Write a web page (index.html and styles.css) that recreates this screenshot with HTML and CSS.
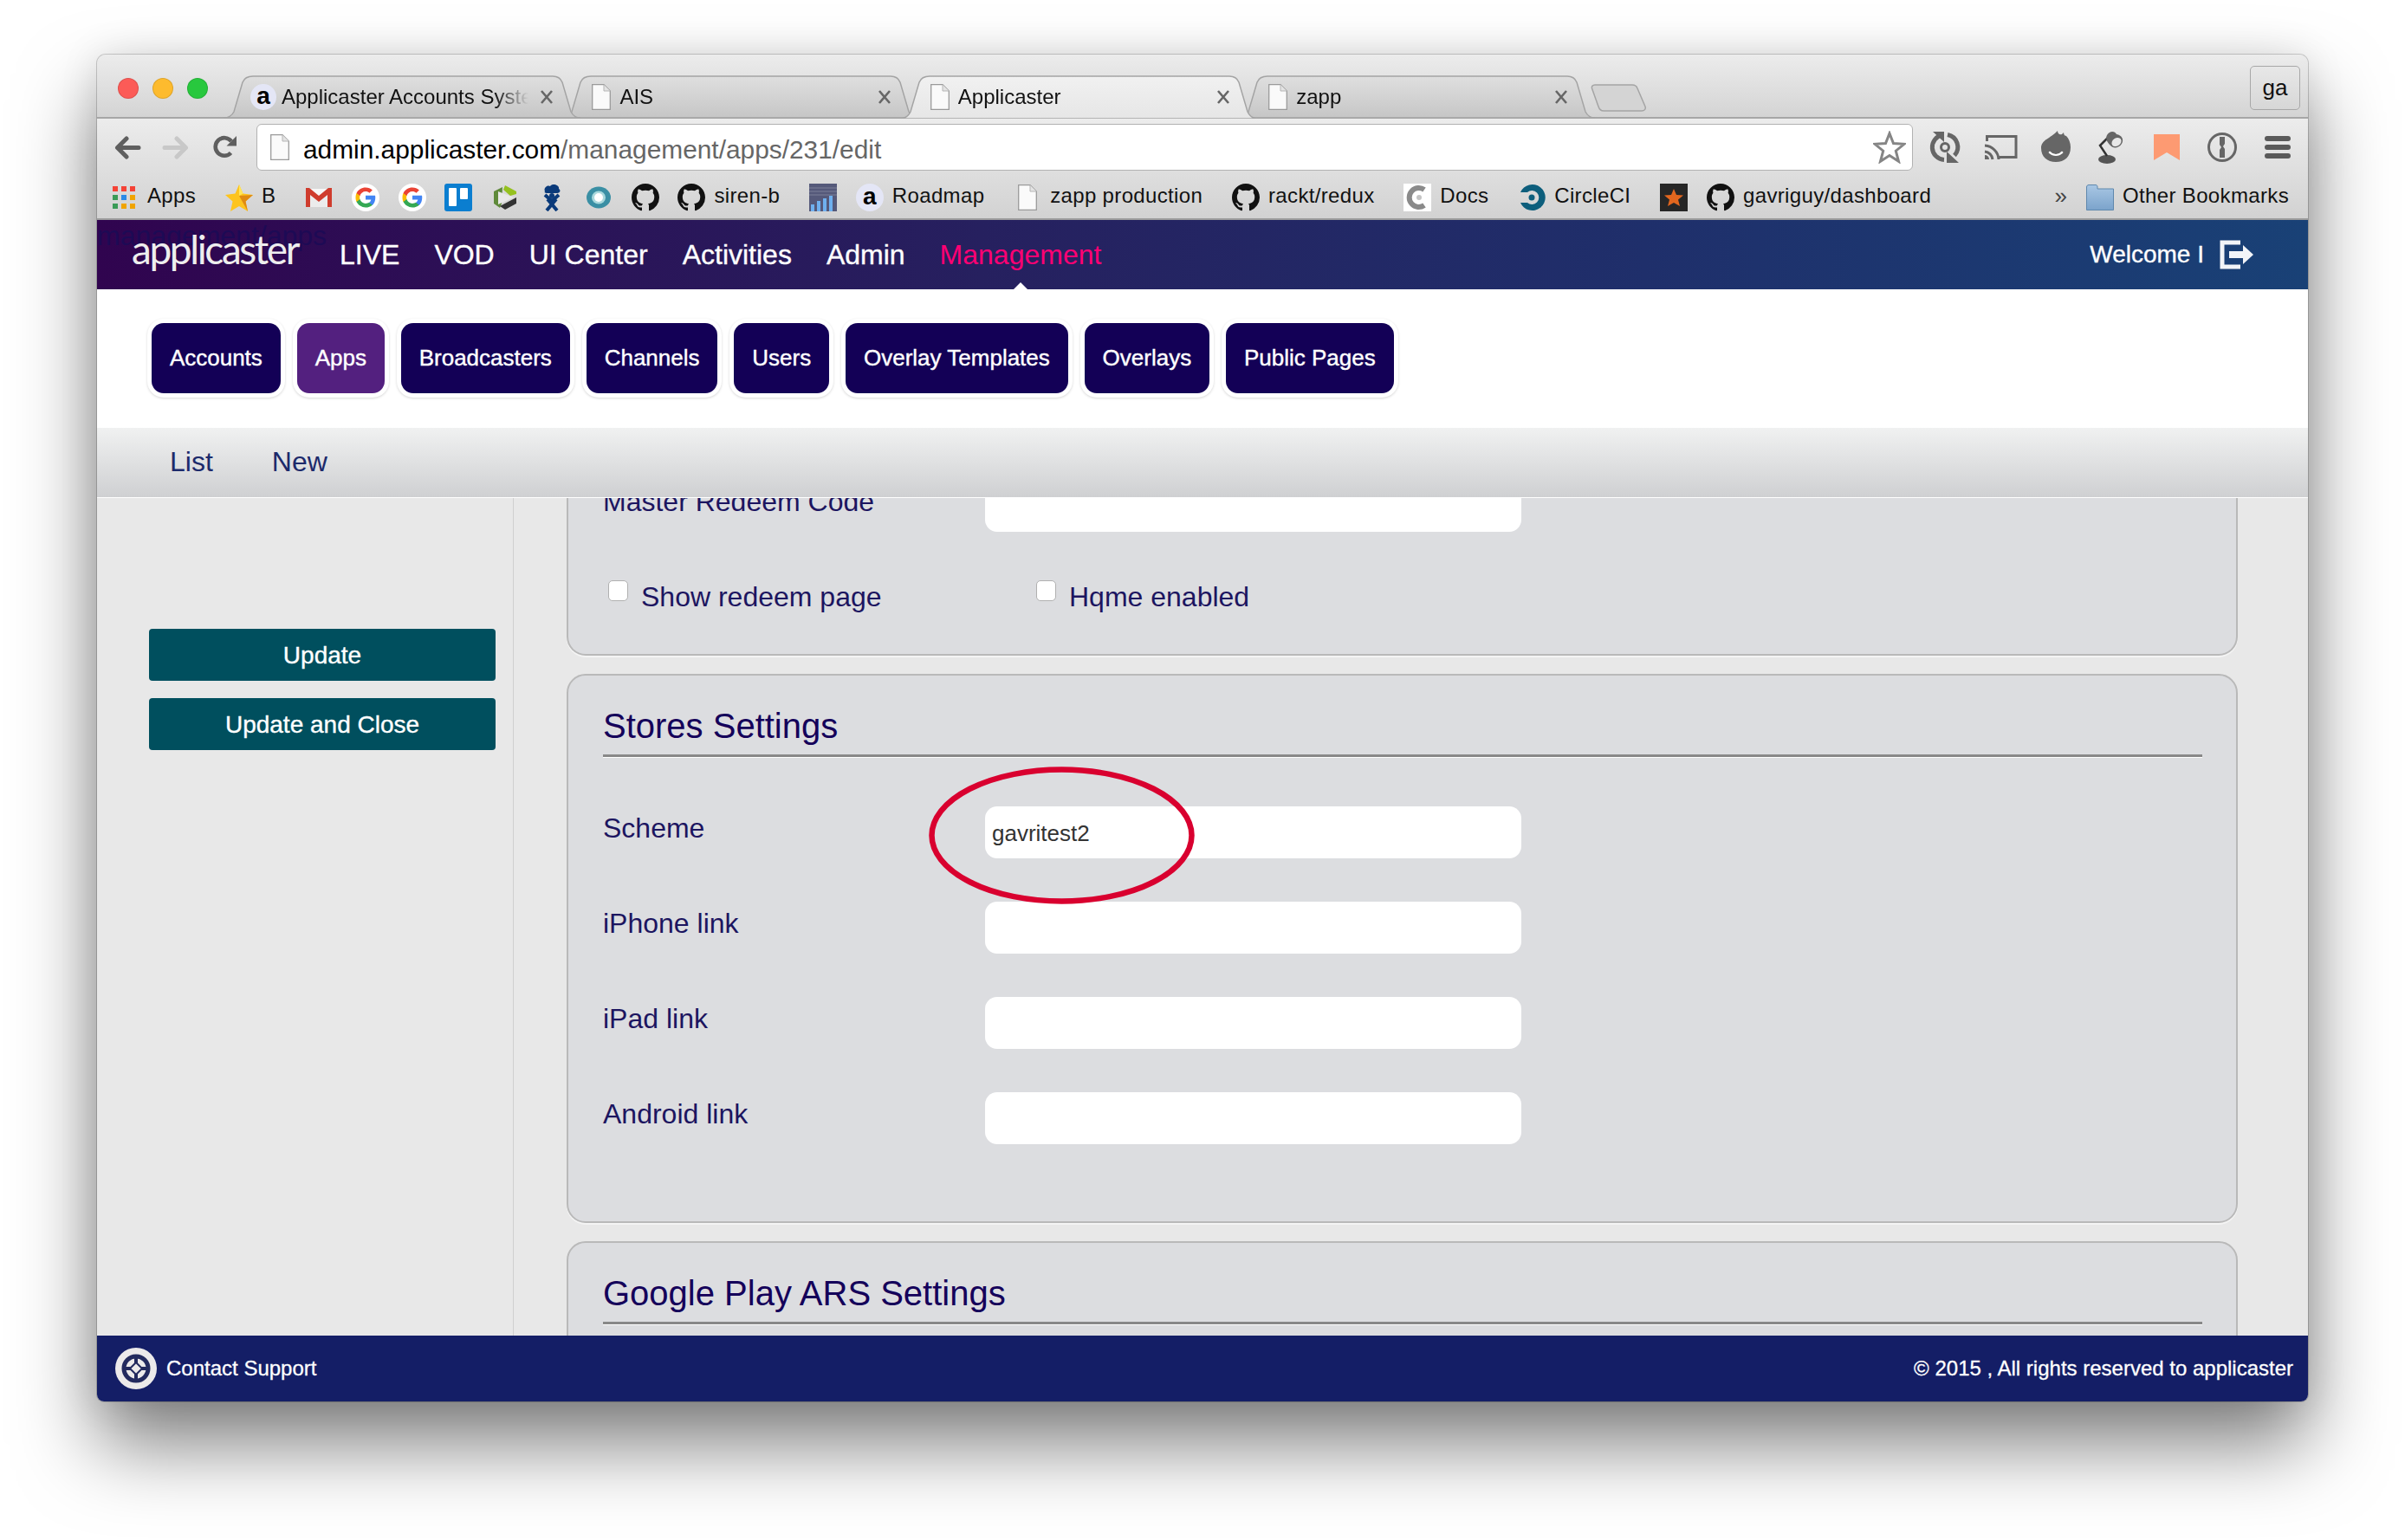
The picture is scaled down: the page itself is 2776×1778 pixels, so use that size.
FILE: index.html
```html
<!DOCTYPE html>
<html lang="en">
<head>
<meta charset="utf-8">
<title>Applicaster</title>
<link rel="stylesheet" href="styles.css">
</head>
<body>
<svg class="sprite" aria-hidden="true">
  <defs>
    <linearGradient id="tabOff" x1="0" y1="0" x2="0" y2="1"><stop offset="0" stop-color="#dfdfdf"/><stop offset="1" stop-color="#c6c6c6"/></linearGradient>
    <linearGradient id="tabOn" x1="0" y1="0" x2="0" y2="1"><stop offset="0" stop-color="#f1f1f1"/><stop offset="1" stop-color="#e6e6e6"/></linearGradient>
    <linearGradient id="folder" x1="0" y1="0" x2="0" y2="1"><stop offset="0" stop-color="#a9c7e4"/><stop offset="1" stop-color="#7ba3cb"/></linearGradient>
    <symbol id="file" viewBox="0 0 22 30"><path d="M.7.7H14L21.300 8V29.300H.7Z" fill="#fafafa" stroke="#9a9a9a" stroke-width="1.300"/><path d="M14 .7V8H21.300" fill="#e4e4e4" stroke="#b5b5b5" stroke-width="1"/></symbol>
    <symbol id="gh" viewBox="0 0 16 16"><path fill="#111" d="M8 0C3.580 0 0 3.580 0 8c0 3.540 2.290 6.530 5.470 7.590.4.07.55-.17.55-.38 0-.19-.01-.82-.01-1.490-2.010.37-2.530-.49-2.690-.94-.09-.23-.48-.94-.82-1.130-.28-.15-.68-.52-.01-.53.63-.01 1.080.58 1.230.82.72 1.210 1.870.87 2.330.66.07-.52.28-.87.51-1.070-1.780-.2-3.640-.89-3.640-3.950 0-.87.31-1.590.82-2.150-.08-.2-.36-1.020.08-2.120 0 0 .67-.21 2.200.82.64-.18 1.320-.27 2-.27.68 0 1.360.09 2 .27 1.530-1.040 2.200-.82 2.200-.82.44 1.100.16 1.920.08 2.120.51.56.82 1.270.82 2.150 0 3.070-1.870 3.750-3.650 3.950.29.25.54.73.54 1.480 0 1.070-.01 1.930-.01 2.200 0 .21.15.46.55.38A8.013 8.013 0 0 0 16 8c0-4.420-3.580-8-8-8z"/></symbol>
    <symbol id="goog" viewBox="0 0 64 64"><circle cx="32" cy="32" r="32" fill="#fff"/><g transform="translate(4.400 4.400) scale(1.150)"><path fill="#4285f4" d="M43.600 24.500c0-1.600-.1-3.100-.4-4.500H24v8.500h11c-.5 2.500-1.900 4.700-4.100 6.100v5.100h6.600c3.900-3.600 6.100-8.900 6.100-15.200z"/><path fill="#34a853" d="M24 44c5.500 0 10.100-1.800 13.500-4.900l-6.600-5.100c-1.800 1.200-4.200 2-6.900 2-5.300 0-9.800-3.600-11.400-8.400H5.800v5.300C9.100 39.500 16 44 24 44z"/><path fill="#fbbc05" d="M12.600 27.600c-.4-1.200-.6-2.500-.6-3.600s.2-2.400.6-3.600v-5.300H5.800C4.700 17.300 4 20.600 4 24s.7 6.700 1.800 8.900z"/><path fill="#ea4335" d="M24 12c3 0 5.700 1 7.800 3l5.900-5.900C34.100 5.800 29.500 4 24 4 16 4 9.100 8.500 5.800 15.100l6.800 5.300C14.200 15.600 18.700 12 24 12z"/></g></symbol>
    <symbol id="tabshape-off" viewBox="0 0 412 50"><path d="M0 49C7 49 10 46 12 42L22 8C24 3 28 1 34 1H380C386 1 389 3 391 8L401 42C403 46 406 49 412 49Z" fill="url(#tabOff)" stroke="#a4a4a4" stroke-width="1.500"/></symbol>
    <symbol id="tabshape-on" viewBox="0 0 412 50"><path d="M0 50C7 50 10 46 12 42L22 8C24 3 28 1 34 1H380C386 1 389 3 391 8L401 42C403 46 406 50 412 50Z" fill="url(#tabOn)" stroke="#a4a4a4" stroke-width="1.500"/></symbol>
    <symbol id="close" viewBox="0 0 16 18"><path d="M2 2L14 16M14 2L2 16" stroke="#666" stroke-width="2.600" fill="none"/></symbol>
  </defs>
</svg>

<div class="window">
  <header class="tabstrip">
    <div class="lights"><span class="light red"></span><span class="light amber"></span><span class="light green"></span></div>
    <div class="tabs">
      <div class="tab first">
        <svg class="tab-bg"><use href="#tabshape-off"/></svg>
        <span class="tab-icon"><span class="fav-a">a</span></span>
        <span class="tab-title">Applicaster Accounts System</span>
        <svg class="tab-close"><use href="#close"/></svg>
      </div>
      <div class="tab second">
        <svg class="tab-bg"><use href="#tabshape-off"/></svg>
        <span class="tab-icon"><svg class="file"><use href="#file"/></svg></span>
        <span class="tab-title">AIS</span>
        <svg class="tab-close"><use href="#close"/></svg>
      </div>
      <div class="tab active">
        <svg class="tab-bg"><use href="#tabshape-on"/></svg>
        <span class="tab-icon"><svg class="file"><use href="#file"/></svg></span>
        <span class="tab-title">Applicaster</span>
        <svg class="tab-close"><use href="#close"/></svg>
      </div>
      <div class="tab fourth">
        <svg class="tab-bg"><use href="#tabshape-off"/></svg>
        <span class="tab-icon"><svg class="file"><use href="#file"/></svg></span>
        <span class="tab-title">zapp</span>
        <svg class="tab-close"><use href="#close"/></svg>
      </div>
      <svg class="newtab" viewBox="0 0 64 32"><path d="M5 1H48C51 1 53 2 54 5L63 26C64 29 62 31 59 31H15C12 31 10 29 9 26L1.500 5C1 3 2 1 5 1Z" fill="#d4d4d4" stroke="#a4a4a4" stroke-width="1.500"/></svg>
    </div>
    <div class="profile">ga</div>
  </header>

  <div class="chrome-lower">
    <div class="toolbar">
      <svg class="tb-back" viewBox="0 0 31 27"><path d="M14 3L3.500 13.500L14 24M4 13.500H28" fill="none" stroke="#5f5f5f" stroke-width="5" stroke-linecap="round" stroke-linejoin="round"/></svg>
      <svg class="tb-forward" viewBox="0 0 31 27"><path d="M17 3L27.500 13.500L17 24M27 13.500H3" fill="none" stroke="#c8c8c8" stroke-width="5" stroke-linecap="round" stroke-linejoin="round"/></svg>
      <svg class="tb-reload" viewBox="0 0 28 28"><path d="M20.500 20.500A10.300 10.300 0 1 1 21 7" fill="none" stroke="#5f5f5f" stroke-width="4.600"/><path d="M27 1V12.500H15.500Z" fill="#5f5f5f"/></svg>
      <div class="omnibox">
        <svg class="file"><use href="#file"/></svg>
        <span class="url"><span class="url-host">admin.applicaster.com</span>/management/apps/231/edit</span>
        <svg class="star" viewBox="0 0 38 38"><path d="M19 3L23.500 14.500L36 15.300L26.300 23.200L29.500 35.300L19 28.500L8.500 35.300L11.700 23.200L2 15.300L14.500 14.500Z" fill="none" stroke="#858585" stroke-width="3"/></svg>
      </div>
      <div class="extensions">
        <svg class="ext" viewBox="0 0 40 40"><path d="M17 5.800A14.500 14.500 0 0 0 19 34.500M23 5.500A14.500 14.500 0 0 1 31 29.500" fill="none" stroke="#666" stroke-width="5"/><path d="M6 2H19V14Z M36 38H22V25Z" fill="#666"/><circle cx="20" cy="20" r="4.500" fill="none" stroke="#666" stroke-width="3"/></svg>
        <svg class="ext" viewBox="0 0 40 40"><path d="M4.500 13V7.500H38V31.500H19" fill="none" stroke="#666" stroke-width="3"/><path d="M2 18A17 17 0 0 1 18 34M2 25A10 10 0 0 1 11 34" fill="none" stroke="#666" stroke-width="3"/><path d="M2 29A5 5 0 0 1 7 34H2Z" fill="#666"/></svg>
        <svg class="ext" viewBox="0 0 40 40"><path d="M22 1C22 4 24 6 27 5L29 3C29 6 31 7 32 7C35 10 37 15 37 20C37 31 30 37 20 37C10 37 3 31 3 21C3 11 14 10 22 1Z" fill="#666"/><path d="M13 26C17 30 23 30 27 26" fill="none" stroke="#fff" stroke-width="2"/><circle cx="13" cy="26" r="1.300" fill="#fff"/><circle cx="27" cy="26" r="1.300" fill="#fff"/></svg>
        <svg class="ext" viewBox="0 0 40 40"><ellipse cx="15" cy="34" rx="10" ry="5" fill="#555"/><path d="M15 30L7 18L17 8" fill="none" stroke="#333" stroke-width="2.500"/><path d="M15 6C18 1 24 1 26 5C32 6 35 11 32 16C29 21 22 22 19 18C15 14 13 10 15 6Z" fill="#666"/><ellipse cx="26" cy="14" rx="6" ry="4.500" fill="#e8e8e8" transform="rotate(-35 26 14)"/></svg>
        <svg class="ext" viewBox="0 0 40 40"><path d="M5 5H35V35L20 26L5 35Z" fill="#fd9a72"/></svg>
        <svg class="ext" viewBox="0 0 40 40"><circle cx="20" cy="20" r="15.500" fill="none" stroke="#666" stroke-width="3"/><path d="M17 8H23V16L21 19L23 22V32H17V23L19 20L17 17Z" fill="#666"/></svg>
        <svg class="ext" viewBox="0 0 40 40"><path d="M8 10H32M8 20H32M8 30H32" stroke="#5a5a5a" stroke-width="6" stroke-linecap="round"/></svg>
      </div>
    </div>
    <nav class="bookmarks">
      <a class="bm"><svg class="bm-icon" viewBox="0 0 26 26"><g fill="#f44336"><rect width="6" height="6"/><rect x="10" width="6" height="6"/><rect x="20" width="6" height="6"/></g><rect y="10" width="6" height="6" fill="#3a9b57"/><rect x="10" y="10" width="6" height="6" fill="#2a8ae6"/><rect x="20" y="10" width="6" height="6" fill="#f0a400"/><rect y="20" width="6" height="6" fill="#3a9b57"/><rect x="10" y="20" width="6" height="6" fill="#f0a400"/><rect x="20" y="20" width="6" height="6" fill="#f0a400"/></svg><span class="bm-label">Apps</span></a>
      <a class="bm"><svg class="bm-icon" viewBox="0 0 32 32"><path d="M16 1L20.500 11.500L32 13L23.500 20.500L26 32L16 26L6 32L8.500 20.500L0 13L11.500 11.500Z" fill="#fdc41e"/><path d="M16 14L32 13L23.500 20.500L26 32Z" fill="#e08a12"/><path d="M16 1L20.500 11.500L16 14Z" fill="#ffe65a"/></svg><span class="bm-label">B</span></a>
      <a class="bm"><svg class="bm-icon" viewBox="0 0 32 32"><path d="M2 6H30V27H2Z" fill="#ececec"/><path d="M2 6L16 17L30 6" fill="#f6f6f6"/><path d="M1 5H5L16 14L27 5H31V27H26V13L16 21L6 13V27H1Z" fill="#cf3c2d"/></svg></a>
      <a class="bm"><svg class="bm-icon"><use href="#goog"/></svg></a>
      <a class="bm"><svg class="bm-icon"><use href="#goog"/></svg></a>
      <a class="bm"><svg class="bm-icon" viewBox="0 0 32 32"><rect width="32" height="32" rx="3" fill="#0b7ed0"/><rect x="5" y="5" width="9" height="21" rx="1" fill="#fff"/><rect x="18" y="5" width="9" height="13" rx="1" fill="#fff"/></svg></a>
      <a class="bm"><svg class="bm-icon" viewBox="0 0 32 32"><path d="M16 2L29 9V12L22 14L14 7Z" fill="#95c11f"/><path d="M3 9L13 4L12 23L10 28L3 23Z" fill="#5f8a3a"/><path d="M8 9L26 16L8 24Z" fill="#e8e8e8"/><path d="M10 26L29 16V23L16 30Z" fill="#333"/></svg></a>
      <a class="bm"><svg class="bm-icon" viewBox="0 0 32 32"><path d="M8 9C6 5 11 1 14 3C17 -1 25 2 24 6C27 8 25 11 22 11H10C8 11 7 10 8 9Z" fill="#0a3a7a"/><path d="M8 13L16 20L24 13" fill="none" stroke="#0a3a7a" stroke-width="4"/><path d="M11 18L22 31M21 18L10 31" fill="none" stroke="#0a3a7a" stroke-width="4"/><circle cx="16" cy="14" r="3" fill="#0a3a7a"/></svg></a>
      <a class="bm"><svg class="bm-icon" viewBox="0 0 32 32"><ellipse cx="16" cy="16" rx="14" ry="12.500" fill="#3a8fa4"/><ellipse cx="16" cy="16" rx="8" ry="7.500" fill="#a8d8dc"/><circle cx="16" cy="16" r="5" fill="#fff"/></svg></a>
      <a class="bm"><svg class="bm-icon"><use href="#gh"/></svg></a>
      <a class="bm"><svg class="bm-icon"><use href="#gh"/></svg><span class="bm-label">siren-b</span></a>
      <a class="bm"><svg class="bm-icon" viewBox="0 0 32 32"><rect width="32" height="32" fill="#55597a"/><path d="M0 5H32M0 9H32M0 13H32" stroke="#7d8098" stroke-width="1"/><g fill="#6fb0ef"><rect x="2" y="24" width="4" height="8"/><rect x="9" y="20" width="4" height="12"/><rect x="16" y="17" width="4" height="15"/><rect x="23" y="14" width="4" height="18"/></g></svg></a>
      <a class="bm"><span class="fav-a bm-fav">a</span><span class="bm-label">Roadmap</span></a>
      <a class="bm"><span class="bm-slot"><svg class="file"><use href="#file"/></svg></span><span class="bm-label">zapp production</span></a>
      <a class="bm"><svg class="bm-icon"><use href="#gh"/></svg><span class="bm-label">rackt/redux</span></a>
      <a class="bm"><svg class="bm-icon" viewBox="0 0 32 32"><rect width="32" height="32" fill="#fff"/><path d="M24 7A11 11 0 1 0 24 25" fill="none" stroke="#8a8a8a" stroke-width="6"/><circle cx="18" cy="16" r="3" fill="#c4c4c4"/></svg><span class="bm-label">Docs</span></a>
      <a class="bm"><svg class="bm-icon" viewBox="0 0 32 32"><path d="M3 10A15 15 0 1 1 3 22H11A8 8 0 1 0 11 10Z" fill="#0d5e7c"/><circle cx="16" cy="16" r="3.500" fill="#0d5e7c"/></svg><span class="bm-label">CircleCI</span></a>
      <a class="bm"><svg class="bm-icon" viewBox="0 0 32 32"><rect width="32" height="32" fill="#262626"/><path d="M16 6L19 13L27 13.500L21 18.500L23 26L16 22L9 26L11 18.500L5 13.500L13 13Z" fill="#e2661e"/></svg></a>
      <a class="bm"><svg class="bm-icon"><use href="#gh"/></svg><span class="bm-label">gavriguy/dashboard</span></a>
      <span class="chevrons">»</span>
      <a class="bm"><svg class="bm-icon" viewBox="0 0 32 30"><path d="M.5 6V3C.5 1.500 1.500 .5 3 .5H11C12.500 .5 13 1.500 13 3V5H31.500V29.500H.5Z" fill="url(#folder)" stroke="#5f88ad"/></svg><span class="bm-label last">Other Bookmarks</span></a>
    </nav>
  </div>

  <nav class="appnav">
    <span class="ghost-crumb">management/apps</span>
    <span class="logo">applicaster</span>
    <a class="nav-item">LIVE</a>
    <a class="nav-item">VOD</a>
    <a class="nav-item">UI Center</a>
    <a class="nav-item">Activities</a>
    <a class="nav-item">Admin</a>
    <a class="nav-item current">Management</a>
    <span class="welcome">Welcome I</span>
    <svg class="logout" viewBox="0 0 40 34"><path d="M24 3H3V31H24" fill="none" stroke="#f2f4f8" stroke-width="5"/><path d="M11 13H27V6L39 17L27 28V21H11Z" fill="#f2f4f8"/></svg>
  </nav>

  <div class="section-tabs">
    <a class="pill">Accounts</a>
    <a class="pill on">Apps</a>
    <a class="pill">Broadcasters</a>
    <a class="pill">Channels</a>
    <a class="pill">Users</a>
    <a class="pill">Overlay Templates</a>
    <a class="pill">Overlays</a>
    <a class="pill">Public Pages</a>
  </div>

  <div class="subnav">
    <a class="sub-link">List</a>
    <a class="sub-link">New</a>
  </div>

  <main class="content">
    <aside class="sidebar">
      <button class="action">Update</button>
      <button class="action">Update and Close</button>
    </aside>
    <div class="panels">
      <section class="panel scrolled">
        <div class="row"><label class="field-label">Master Redeem Code</label><div class="field"><input class="text-input" type="text"></div></div>
        <div class="checks">
          <label class="check"><input class="checkbox" type="checkbox"><span>Show redeem page</span></label>
          <label class="check"><input class="checkbox" type="checkbox"><span>Hqme enabled</span></label>
        </div>
      </section>
      <section class="panel stores">
        <h2 class="panel-title">Stores Settings</h2>
        <div class="row"><label class="field-label">Scheme</label><div class="field"><input class="text-input" type="text" value="gavritest2">
          <svg class="annotation" viewBox="0 0 307 159"><ellipse cx="153.500" cy="79.500" rx="150" ry="76" fill="none" stroke="#d9002f" stroke-width="6.500"/></svg></div></div>
        <div class="row"><label class="field-label">iPhone link</label><div class="field"><input class="text-input" type="text"></div></div>
        <div class="row"><label class="field-label">iPad link</label><div class="field"><input class="text-input" type="text"></div></div>
        <div class="row"><label class="field-label">Android link</label><div class="field"><input class="text-input" type="text"></div></div>
      </section>
      <section class="panel">
        <h2 class="panel-title">Google Play ARS Settings</h2>
      </section>
    </div>
  </main>

  <footer class="footer">
    <svg class="support-icon" viewBox="0 0 48 48"><circle cx="24" cy="24" r="24" fill="#eceaea"/><circle cx="24" cy="24" r="14" fill="none" stroke="#232a5e" stroke-width="5"/><path d="M24 10V19M24 29V38M10 24H19M29 24H38" stroke="#232a5e" stroke-width="4"/><path d="M24 17L31 24L24 31L17 24Z" fill="#eceaea" stroke="#232a5e" stroke-width="2"/></svg>
    <span class="support-text">Contact Support</span>
    <span class="copyright">© 2015 , All rights reserved to applicaster</span>
  </footer>
</div>
</body>
</html>
```

FILE: styles.css
```css
* { box-sizing: border-box; }
html, body { margin: 0; background: #fff; }
body {
  width: 2776px;
  height: 1778px;
  padding: 63px 112px 0;
  overflow: hidden;
  font-family: "Liberation Sans", Arial, sans-serif;
}
.sprite { position: absolute; width: 0; height: 0; }

.window {
  width: 2552px;
  height: 1555px;
  display: flex;
  flex-direction: column;
  border-radius: 10px 10px 8px 8px;
  overflow: hidden;
  box-shadow: 0 50px 90px rgba(0,0,0,.5), 0 0 46px rgba(0,0,0,.1), 0 0 0 1px rgba(0,0,0,.18);
  background: #e8e8e8;
}

/* tab strip */
.tabstrip {
  height: 74px;
  flex: none;
  display: flex;
  align-items: flex-start;
  background: linear-gradient(#ececec, #d4d4d4);
  border-bottom: 2px solid #a6a6a6;
}
.lights { display: flex; gap: 16px; margin: 27px 0 0 24px; }
.light { width: 24px; height: 24px; border-radius: 50%; border: 1px solid rgba(0,0,0,.12); }
.red { background: #fc5b57; }
.amber { background: #fdbb2e; }
.green { background: #28c83e; }
.tabs { display: flex; align-items: flex-start; margin: 24px 0 0 18px; }
.tab {
  position: relative;
  width: 412px;
  height: 50px;
  margin-right: -21.600px;
  display: flex;
  align-items: center;
  padding: 0 31px;
  font-size: 24px;
  color: #111;
}
.tab-bg { position: absolute; left: 0; top: 0; width: 412px; height: 50px; }
.first { z-index: 3; }
.second { z-index: 2; }
.active { z-index: 4; }
.fourth { z-index: 1; }
.tab-icon { position: relative; width: 30px; height: 30px; display: flex; align-items: center; justify-content: center; flex: none; margin-right: 6px; }
.file { width: 22px; height: 30px; flex: none; }
.fav-a {
  width: 30px; height: 30px; border-radius: 50%;
  background: #e4e6f6;
  color: #000;
  font-weight: 700;
  font-size: 28px;
  line-height: 28px;
  text-align: center;
  flex: none;
}
.tab-title {
  position: relative;
  flex: 1;
  white-space: nowrap;
  overflow: hidden;
  -webkit-mask-image: linear-gradient(to left, transparent 6px, #000 45px);
  mask-image: linear-gradient(to left, transparent 6px, #000 45px);
}
.tab-close { position: relative; width: 16px; height: 18px; flex: none; margin-left: 7px; }
.newtab { width: 64px; height: 32px; margin: 10px 0 0 16px; position: relative; flex: none; }
.profile {
  margin: 13px 9px 0 auto;
  width: 58px; height: 51px;
  border: 1px solid #a8a8a8;
  border-radius: 5px;
  font-size: 26px;
  text-align: center;
  line-height: 48px;
  color: #111;
  flex: none;
}

/* toolbar + bookmarks */
.chrome-lower {
  flex: none;
  background: linear-gradient(#ececec, #d2d2d2);
  border-bottom: 2px solid #9c9c9c;
}
.toolbar { height: 66px; display: flex; align-items: center; padding-left: 20px; }
.tb-back, .tb-forward { width: 31px; height: 27px; flex: none; }
.tb-forward { margin-left: 24px; }
.tb-reload { width: 28px; height: 28px; margin-left: 28px; flex: none; }
.omnibox {
  margin-left: 22px;
  width: 1912px;
  height: 54px;
  background: #fff;
  border: 1px solid #b2b2b2;
  border-radius: 6px;
  display: flex;
  align-items: center;
  padding-left: 15px;
  font-size: 29.870px;
  color: #666;
}
.url { margin: 5px 0 0 16px; white-space: nowrap; }
.url-host { color: #000; }
.star { width: 38px; height: 38px; margin-left: auto; margin-right: 7px; flex: none; }
.extensions { display: flex; gap: 24px; margin-left: 17px; }
.ext { width: 40px; height: 40px; flex: none; }

.bookmarks {
  height: 49px;
  display: flex;
  align-items: center;
  gap: 21.800px;
  padding: 0 22px 0 18px;
  font-size: 24px;
  letter-spacing: .35px;
  color: #111;
}
.bm { display: flex; align-items: center; gap: 10px; flex: none; }
.bm-icon { width: 32px; height: 32px; flex: none; }
.bm:first-child .bm-icon { width: 26px; height: 26px; margin-right: 4px; }
.bm-fav { width: 32px; height: 32px; line-height: 30px; }
.bm-slot { width: 32px; display: flex; justify-content: center; }
.bm-label { margin: -3px 12px 0 0; white-space: nowrap; }
.bm-label.last { margin-right: 0; }
.chevrons { margin-left: auto; font-size: 26px; color: #444; margin-top: -3px; }

/* app nav */
.appnav {
  position: relative;
  height: 80px;
  flex: none;
  display: flex;
  align-items: center;
  gap: 40px;
  padding: 0 62px 0 40px;
  background: linear-gradient(90deg, #30044f 0%, #26205f 40%, #1f2f6b 70%, #194176 100%);
  color: #fff;
  font-size: 32px;
}
.ghost-crumb { position: absolute; left: 0; top: 0; line-height: 36px; color: #1d0a55; white-space: nowrap; }
.logo {
  position: relative;
  width: 200px;
  font-family: Lato, "Open Sans", sans-serif;
  font-size: 46px;
  letter-spacing: -2.400px;
  line-height: 50px;
  margin-top: -13px;
  color: #eee;
}
.nav-item { position: relative; height: 100%; display: flex; align-items: center; -webkit-text-stroke: .35px currentColor; }
.nav-item.current { color: #ff0073; -webkit-text-stroke: 0; }
.nav-item.current::after {
  content: "";
  position: absolute;
  left: 50%;
  bottom: 0;
  margin-left: -8px;
  border: 8px solid transparent;
  border-top: 0;
  border-bottom-color: #fff;
}
.welcome { margin-left: auto; font-size: 28px; margin-right: -22px; -webkit-text-stroke: .35px #fff; }
.logout { width: 40px; height: 34px; flex: none; }

/* section tabs */
.section-tabs {
  height: 160px;
  flex: none;
  background: #fff;
  display: flex;
  gap: 19px;
  align-items: flex-start;
  padding: 39px 0 0 63px;
}
.pill {
  height: 81px;
  padding: 0 20.900px;
  display: flex;
  align-items: center;
  border-radius: 14px;
  background: #130056;
  color: #fff;
  font-size: 26px;
  -webkit-text-stroke: .4px #fff;
  box-shadow: 0 0 0 5px #fff, 0 1px 3px 5px rgba(0,0,0,.16);
}
.pill.on { background: #53207f; }

.subnav {
  height: 81px;
  flex: none;
  display: flex;
  align-items: center;
  gap: 68px;
  padding: 0 0 2px 84px;
  background: linear-gradient(#f0f1f1, #cfd0d2);
  border-bottom: 1px solid #fff;
  font-size: 32px;
  color: #1c2a6b;
}

/* content */
.content { flex: 1; min-height: 0; display: flex; overflow: hidden; background: #e8e8e8; }
.sidebar {
  width: 481px;
  flex: none;
  border-right: 1px solid #cfcfcf;
  padding: 151px 0 0 60px;
  display: flex;
  flex-direction: column;
  gap: 20px;
  align-items: flex-start;
}
.action {
  width: 400px;
  height: 60px;
  border: 0;
  border-radius: 4px;
  padding: 2px 0 0;
  background: #004f5e;
  color: #fff;
  font: 28px "Liberation Sans", Arial, sans-serif;
  -webkit-text-stroke: .35px #fff;
}
.panels { margin-left: 61px; width: 1929px; flex: none; display: flex; flex-direction: column; gap: 21px; }
.panel {
  flex: none;
  background: #dcdde0;
  border: 2px solid #b9b9b9;
  border-radius: 22px;
  padding: 33px 39px 0 40px;
  box-shadow: 0 2px 0 #f4f4f4;
}
.panel.scrolled { margin-top: -100px; padding-top: 77px; padding-bottom: 46px; border-top-color: transparent; }
.panel.stores { padding-bottom: 39px; }
.panel-title {
  margin: 0 0 57px;
  font-size: 40px;
  font-weight: 400;
  line-height: 50px;
  color: #14005a;
  padding-bottom: 8px;
  border-bottom: 3px solid #888;
  box-shadow: 0 1px 0 #fff;
}
.row { display: flex; margin-bottom: 50px; }
.field-label { width: 441px; flex: none; font-size: 32px; line-height: 50px; color: #1c1560; white-space: nowrap; }
.field { position: relative; width: 619px; flex: none; }
.text-input {
  display: block;
  width: 100%;
  height: 60px;
  border: 0;
  border-radius: 14px;
  background: #fff;
  padding: 2px 8px 0;
  font: 26px "Liberation Sans", Arial, sans-serif;
  color: #333;
  outline: none;
}
.annotation { position: absolute; left: -65px; top: -46px; width: 307px; height: 159px; z-index: 2; }
.checks { display: flex; margin-top: 55px; padding-left: 6px; }
.check { width: 494px; flex: none; display: flex; align-items: flex-start; gap: 15px; font-size: 32px; line-height: 40px; color: #1c1560; }
.checkbox {
  appearance: none;
  -webkit-appearance: none;
  width: 23px; height: 24px;
  margin: 1px 0 0;
  background: #fff;
  border: 1px solid #b0b0b0;
  border-radius: 5px;
  flex: none;
}

/* footer */
.footer {
  height: 76px;
  flex: none;
  display: flex;
  align-items: center;
  padding: 0 17px 0 21px;
  background: #141e66;
  color: #fff;
  font-size: 24px;
  -webkit-text-stroke: .3px #fff;
}
.support-icon { width: 48px; height: 48px; flex: none; margin-right: 11px; }
.copyright { margin-left: auto; }
```
